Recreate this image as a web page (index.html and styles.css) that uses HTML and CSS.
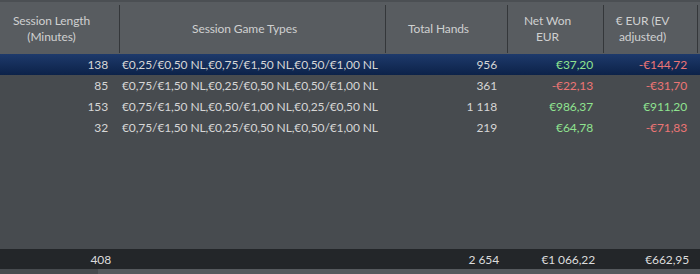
FILE: index.html
```html
<!DOCTYPE html>
<html>
<head>
<meta charset="utf-8">
<link rel="stylesheet" href="styles.css">
</head>
<body>
<div class="grid">
  <div class="head">
    <div class="hc"><span>Session Length<br>(Minutes)</span></div>
    <div class="hc"><span>Session Game Types</span></div>
    <div class="hc"><span>Total Hands</span></div>
    <div class="hc"><span>Net Won<br>EUR</span></div>
    <div class="hc"><span>€ EUR (EV<br>adjusted)</span></div>
  </div>
  <div class="body">
    <div class="row sel">
      <div class="c num">138</div>
      <div class="c txt">€0,25/€0,50 NL,€0,75/€1,50 NL,€0,50/€1,00 NL</div>
      <div class="c num">956</div>
      <div class="c num pos">€37,20</div>
      <div class="c num neg">-€144,72</div>
    </div>
    <div class="row">
      <div class="c num">85</div>
      <div class="c txt">€0,75/€1,50 NL,€0,25/€0,50 NL,€0,50/€1,00 NL</div>
      <div class="c num">361</div>
      <div class="c num neg">-€22,13</div>
      <div class="c num neg">-€31,70</div>
    </div>
    <div class="row">
      <div class="c num">153</div>
      <div class="c txt">€0,75/€1,50 NL,€0,50/€1,00 NL,€0,25/€0,50 NL</div>
      <div class="c num">1 118</div>
      <div class="c num pos">€986,37</div>
      <div class="c num pos">€911,20</div>
    </div>
    <div class="row">
      <div class="c num">32</div>
      <div class="c txt">€0,75/€1,50 NL,€0,25/€0,50 NL,€0,50/€1,00 NL</div>
      <div class="c num">219</div>
      <div class="c num pos">€64,78</div>
      <div class="c num neg">-€71,83</div>
    </div>
  </div>
  <div class="foot">
    <div class="f num">408</div>
    <div class="f"></div>
    <div class="f num">2 654</div>
    <div class="f num">€1 066,22</div>
    <div class="f num">€662,95</div>
  </div>
  <div class="scroll"><div class="track"></div></div>
</div>
</body>
</html>
```

FILE: styles.css
```css
html, body {
  margin: 0;
  padding: 0;
  background: #474b4f;
}
body {
  width: 700px;
  height: 274px;
  overflow: hidden;
  font-family: Lato, "Open Sans", sans-serif;
  font-size: 12px;
  letter-spacing: -0.1px;
  color: #d6d6d6;
}
.grid {
  display: flex;
  flex-direction: column;
  height: 274px;
}
.head, .row, .foot {
  display: grid;
  grid-template-columns: 120px 266px 122px 96px 94px 2px;
}
.head {
  height: 52px;
  border-top: 2px solid #4b4f53;
  background: #585c60;
  color: #cfd0d0;
}
.hc {
  display: flex;
  align-items: center;
  justify-content: center;
  text-align: center;
  line-height: 16px;
  padding-right: 16px;
  margin: 3px 0 1px;
  border-right: 1px solid #34373a;
}
.body {
  flex: 1;
  background: #474b4f;
}
.row {
  height: 21px;
  align-items: center;
}
.row.sel {
  background: linear-gradient(#1e3a6b, #0c2249);
}
.c {
  white-space: nowrap;
  overflow: hidden;
}
.num {
  text-align: right;
  padding-right: 11px;
}
.row .c:first-child { padding-right: 12px; }
.txt {
  padding-left: 2px;
}
.pos { color: #8fe38f; }
.neg { color: #ec7575; }
.foot {
  height: 20px;
  align-items: center;
  background: #232629;
  color: #dcdcdc;
}
.f.num { padding-right: 9px; }
.scroll {
  height: 5px;
  background: #55595d;
  display: flex;
}
.track {
  width: 98px;
  background: #474b4f;
}
```
